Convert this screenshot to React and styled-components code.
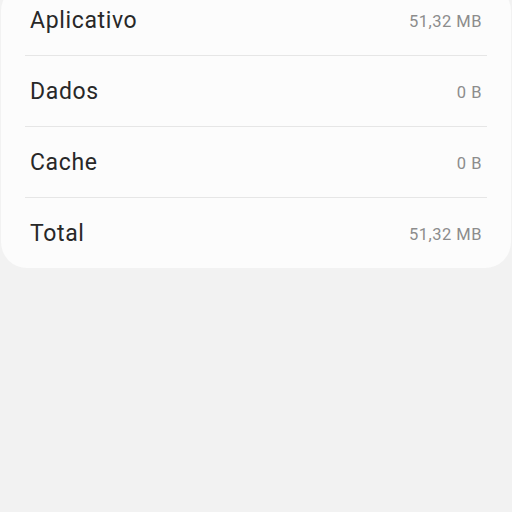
import styled, { createGlobalStyle } from "styled-components";

const GlobalStyle = createGlobalStyle`
  html, body {
    margin: 0;
    padding: 0;
    background: #f2f2f2;
    font-family: Roboto, "Noto Sans", sans-serif;
  }
`;

const Page = styled.div`
  width: 512px;
  height: 512px;
  overflow: hidden;
  background: #f2f2f2;
`;

const Card = styled.div`
  margin: -15px 1px 0 1px;
  background: #fcfcfc;
  border-radius: 26px;
  padding: 0 24px;
`;

const Row = styled.div`
  display: flex;
  align-items: center;
  justify-content: space-between;
  height: 70px;
  padding: 0 5px 0 5px;
  border-bottom: ${(p) => (p.last ? "none" : "1px solid #e6e6e6")};
`;

const Label = styled.span`
  font-size: 23px;
  color: #282828;
  letter-spacing: 0.65px;
`;

const Value = styled.span`
  font-size: 16.5px;
  color: #8c8c8c;
  letter-spacing: 0.5px;
  margin-top: 2px;
`;

const items = [
  { label: "Aplicativo", value: "51,32 MB" },
  { label: "Dados", value: "0 B" },
  { label: "Cache", value: "0 B" },
  { label: "Total", value: "51,32 MB" },
];

export default function App() {
  return (
    <Page>
      <GlobalStyle />
      <Card>
        {items.map((it, i) => (
          <Row key={it.label} last={i === items.length - 1}>
            <Label>{it.label}</Label>
            <Value>{it.value}</Value>
          </Row>
        ))}
      </Card>
    </Page>
  );
}
